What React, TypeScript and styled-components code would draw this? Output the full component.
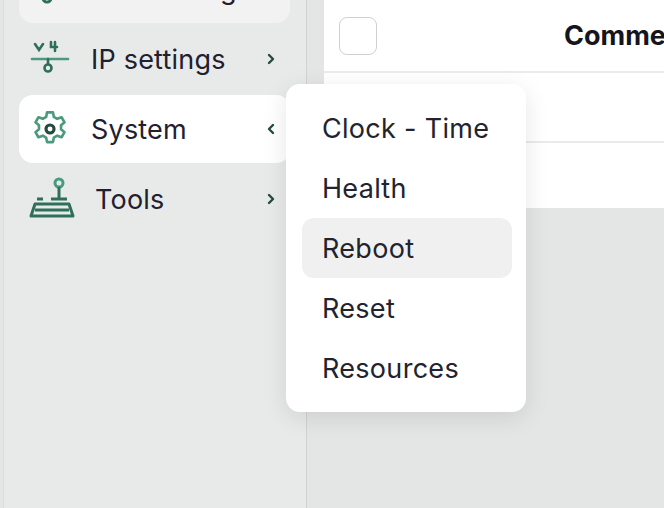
import React from "react";
import styled, { createGlobalStyle } from "styled-components";

const G = createGlobalStyle`
  html, body { margin: 0; padding: 0; background: #e4e6e5; font-family: Inter, "Noto Sans", sans-serif; }
  #root { width: 664px; height: 508px; overflow: hidden; }
`;

const Page = styled.div`
  display: flex; width: 664px; height: 508px; position: relative; overflow: hidden;
`;
const Side = styled.div`
  flex: 0 0 304px; margin-left: 3px; background: #e8eaea; border-right: 1px solid #cfd2d1;
  display: flex; flex-direction: column; gap: 2px; padding: 0 16px 0 15px; box-sizing: border-box;
  border-left: 1px solid #dcdedd;
  margin-top: -45px;
`;
const Item = styled.div<{ $active?: boolean; $soft?: boolean }>`
  height: 68px; border-radius: 14px; display: flex; align-items: center; white-space: nowrap;
  padding: 0 12px 0 10px; gap: 20px; font-size: 27px; color: #1f2030; letter-spacing: 0.2px;
  background: ${p => (p.$active ? "#fff" : p.$soft ? "#f1f2f1" : "transparent")};
`;
const Label = styled.span`flex: 1;`;
const Chev = styled.svg`width: 14px; height: 14px;`;
const Main = styled.div`
  flex: 1; padding-left: 17px; display: flex; flex-direction: column; min-width: 0;
`;
const Table = styled.div`background: #fff; height: 208px; display: flex; flex-direction: column;`;
const Row = styled.div<{ $h: number }>`
  height: ${p => p.$h}px; border-bottom: 2px solid #ebebeb; display: flex; align-items: center;
  padding-left: 15px; box-sizing: border-box; &:last-child { border-bottom: none; }
`;
const Box = styled.div`flex: 0 0 36px; height: 36px; border: 1.5px solid #cfd1d0; border-radius: 8px;`;
const Head = styled.span`font-weight: 700; font-size: 27px; color: #14151f; margin-left: 187px; white-space: nowrap;`;
const Menu = styled.div`
  position: absolute; left: 286px; top: 84px; width: 240px; background: #fff; border-radius: 14px;
  box-shadow: 0 6px 24px rgba(0,0,0,0.1); padding: 14px 14px 14px 16px; box-sizing: border-box;
  display: flex; flex-direction: column;
`;
const MItem = styled.div<{ $hl?: boolean }>`
  height: 60px; border-radius: 12px; display: flex; align-items: center; padding-left: 20px;
  font-size: 27px; letter-spacing: 0.3px; color: #22232f; white-space: nowrap;
  background: ${p => (p.$hl ? "#f0f0f0" : "transparent")};
`;

const green = "#2f6f5a";
const Right = () => (<Chev viewBox="0 0 14 14"><path d="M5 3l4 4-4 4" fill="none" stroke="#234b40" strokeWidth="2.4" strokeLinecap="round" strokeLinejoin="round"/></Chev>);
const Left = () => (<Chev viewBox="0 0 14 14"><path d="M9 3L5 7l4 4" fill="none" stroke="#234b40" strokeWidth="2.4" strokeLinecap="round" strokeLinejoin="round"/></Chev>);

const WifiIcon = () => (<svg width="42" height="42" viewBox="0 0 42 42"><path d="M3 30h36" stroke={green} strokeWidth="3"/><circle cx="18" cy="30" r="4" fill="#fff" stroke={green} strokeWidth="3"/></svg>);
const IpIcon = () => (<svg width="42" height="42" viewBox="0 0 42 42" fill="none" stroke={green} strokeWidth="2.6" strokeLinecap="round">
  <path d="M6 6l4 6 4-6M22 4v5h6M26 4v9"/><path d="M3 21h36" stroke="#4a9a7c"/><path d="M19 21v5"/><circle cx="19" cy="30" r="3.5"/></svg>);
const GearIcon = () => (<svg width="42" height="42" viewBox="0 0 24 24" fill="none" stroke="#4a9a7c" strokeWidth="1.5" strokeLinejoin="round">
  <path d="M10.3 2.5h3.4l.5 2.6 1.9 1.1 2.5-.9 1.7 2.9-2 1.7v2.2l2 1.7-1.7 2.9-2.5-.9-1.9 1.1-.5 2.6h-3.4l-.5-2.6-1.9-1.1-2.5.9-1.7-2.9 2-1.7v-2.2l-2-1.7 1.7-2.9 2.5.9 1.9-1.1z"/>
  <circle cx="12" cy="12" r="2.3" stroke="#234b40" strokeWidth="1.8"/></svg>);
const ToolIcon = () => (<svg width="46" height="46" viewBox="0 0 46 46" fill="none" stroke={green} strokeWidth="3" strokeLinejoin="round">
  <circle cx="30" cy="7" r="4" stroke="#4a9a7c"/><path d="M30 11v12M22 23h16" /><path d="M8 23h6M6 28h34l4 12H2z" /><path d="M6 34h34"/></svg>);

export default function App() {
  return (<>
    <G />
    <Page>
      <Side>
        <Item $soft><WifiIcon /><Label>Wifi settings</Label></Item>
        <Item><IpIcon /><Label>IP settings</Label><Right /></Item>
        <Item $active><GearIcon /><Label>System</Label><Left /></Item>
        <Item><ToolIcon /><Label>Tools</Label><Right /></Item>
      </Side>
      <Main>
        <Table>
          <Row $h={73}><Box /><Head>Comments</Head></Row>
          <Row $h={70} />
          <Row $h={65} />
        </Table>
      </Main>
      <Menu>
        <MItem>Clock - Time</MItem>
        <MItem>Health</MItem>
        <MItem $hl>Reboot</MItem>
        <MItem>Reset</MItem>
        <MItem>Resources</MItem>
      </Menu>
    </Page>
  </>);
}
